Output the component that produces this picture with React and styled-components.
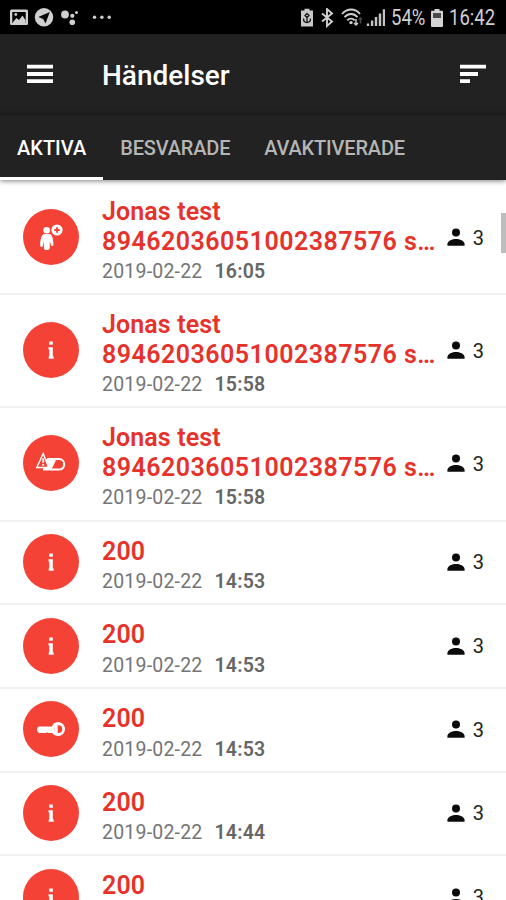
import React from "react";
import styled, { createGlobalStyle } from "styled-components";

const events = [
  { icon: "assist", name: "Jonas test", serial: "89462036051002387576 s…", time: "16:05" },
  { icon: "info", name: "Jonas test", serial: "89462036051002387576 s…", time: "15:58" },
  { icon: "battery", name: "Jonas test", serial: "89462036051002387576 s…", time: "15:58" },
  { icon: "info", name: "200", time: "14:53" },
  { icon: "info", name: "200", time: "14:53" },
  { icon: "key", name: "200", time: "14:53" },
  { icon: "info", name: "200", time: "14:44" },
  { icon: "info", name: "200" },
];

const tabs = ["AKTIVA", "BESVARADE", "AVAKTIVERADE"];

const EventIcon = ({ type }) => {
  if (type === "assist") {
    return (
      <svg width="56" height="56" viewBox="0 0 56 56" fill="#fff">
        <circle cx="23.700" cy="21.300" r="3.300" />
        <path d="M20.800 25h6.200c2.200 1.200 3.500 5.200 3.400 11.500l-2 .8-1.600-5v7.200l-1.500 1.600h-3.400l-1-1.600v-7l-1.400 5.500-2.300-.5c-.2-5.400.8-11.300 3.600-12.500z" />
        <circle cx="34" cy="21" r="5.600" />
        <path d="M33.100 18.300h1.800v1.800h1.800v1.800h-1.800v1.800h-1.800v-1.800h-1.800v-1.800h1.800z" fill="#f44336" />
      </svg>
    );
  }
  if (type === "battery") {
    return (
      <svg width="56" height="56" viewBox="0 0 56 56">
        <path
          d="M20 34.500h16c3.200 0 5.200-2.400 5.200-5.200s-2-5.300-5.200-5.300H24"
          fill="none"
          stroke="#fff"
          strokeWidth="2"
        />
        <path d="M23 24h10.500l-5 10.500H20z" fill="#fff" />
        <path d="M20.200 18.500 13.800 32.500h11.800z" fill="#f44336" stroke="#fff" strokeWidth="1.400" />
        <path d="M20.200 23.200v4.500M20.200 29v1.800" stroke="#fff" strokeWidth="1.800" />
      </svg>
    );
  }
  if (type === "key") {
    return (
      <svg width="56" height="56" viewBox="0 0 56 56" fill="#fff">
        <path
          fillRule="evenodd"
          d="M35 21a7 7 0 1 1-5.800 10.900h-3.700l-1.200-.7-1.300.7H15.900L14.100 30v-2.800l1.600-1.600h13.100A7 7 0 0 1 35 21zm.4 3.200a3.900 3.900 0 1 0 0 7.800 3.900 3.900 0 0 0 0-7.800z"
        />
        <path d="M31.500 24h3.200v8.200h-3.200z" />
      </svg>
    );
  }
  return (
    <svg width="56" height="56" viewBox="0 0 56 56" fill="#fff">
      <path d="M26.200 19.400h3.600v3.400h-3.600zM25.500 25.300h4.300v9.300h.9v2.200h-5v-2.200h.6v-7.100h-.8z" />
    </svg>
  );
};

const PersonIcon = () => (
  <svg width="18" height="19" viewBox="0 0 18 19" fill="#0b0b0b">
    <circle cx="9" cy="4.500" r="4" />
    <path d="M.4 17.800v-1.700C.4 12.700 5.500 10.900 9 10.900s8.600 1.800 8.600 5.200v1.700z" />
  </svg>
);

const NotificationIcons = () => (
  <svg width="104" height="20" viewBox="0 0 104 20" fill="#d0d0d0">
    <path
      fillRule="evenodd"
      d="M1.500 1.500h15q1.500 0 1.500 1.500v12.500q0 1.500-1.500 1.500h-15q-1.500 0-1.500-1.500V3q0-1.500 1.500-1.500zM2.300 4v11h13.400V4z"
    />
    <path d="m3 14 3.500-4 2.500 2 3.500-4.500 3.200 5V15H3z" />
    <circle cx="5.800" cy="6.500" r="1.400" />
    <circle cx="34" cy="9.200" r="9.200" />
    <path d="m28.300 9.100 11.500-5-4.300 11.500-2.300-4.700z" fill="#080808" />
    <circle cx="55" cy="6.500" r="3.900" />
    <circle cx="62.300" cy="7.800" r="2.100" />
    <circle cx="66.500" cy="4.500" r="1.500" />
    <circle cx="62.300" cy="14.200" r="2.800" />
    <circle cx="84.500" cy="9.300" r="1.700" />
    <circle cx="91.900" cy="9.300" r="1.700" />
    <circle cx="99.200" cy="9.300" r="1.700" />
  </svg>
);

const SignalIcons = () => (
  <svg width="84" height="20" viewBox="0 0 84 20" fill="none">
    <path d="M3.500 2.500V.8h5v1.700H12v16H0v-16z" fill="#c8c8c8" />
    <path
      d="m6 5.500 2 2-2 2-2-2zM6 10v5M2.500 10.500c0 3 1.500 4 3.500 4s3.500-1 3.500-4"
      stroke="#161616"
      strokeWidth="1.300"
    />
    <path d="m21 5.500 10 8-5 4.500V1l5 4.500-10 8" stroke="#d0d0d0" strokeWidth="1.900" />
    <path
      d="M41 6c5.200-6 13.200-6 18 0M43.500 9.200c4-4.200 9.300-4.200 13 0M46.300 12.300c2.200-2.300 5.300-2.300 7.400 0"
      stroke="#d0d0d0"
      strokeWidth="1.900"
    />
    <circle cx="50" cy="14.600" r="1.700" fill="#d0d0d0" />
    <path d="M55 11v6m-2-2 2 2 2-2" stroke="#c8c8c8" strokeWidth="1.500" />
    <path d="M59.500 15.500V10m-1.500 1.500 1.500-1.500 1.500 1.500" stroke="#4a4a4a" strokeWidth="1.400" />
    <path
      d="M67 15.500v2.500M71.100 12.500V18M75 9v9M79 5.500V18M83 1.200V18"
      stroke="#c4c4c4"
      strokeWidth="2.400"
    />
  </svg>
);

const BatteryIcon = () => (
  <svg width="12" height="18" viewBox="0 0 12 18">
    <path d="M3.500 1.700V0h5v1.700H11q1 0 1 1V17q0 1-1 1H1q-1 0-1-1V2.700q0-1 1-1z" fill="#d4d4d4" />
    <path d="M2 4h8v5H2z" fill="#4a4a4a" />
  </svg>
);

const App = () => {
  return (
    <>
      <GlobalStyle />
      <Screen>
        <StatusBar>
          <NotificationIcons />
          <StatusRight>
            <SignalIcons />
            <StatusText width={34}>54%</StatusText>
            <BatteryIcon />
            <StatusText width={46}>16:42</StatusText>
          </StatusRight>
        </StatusBar>
        <Toolbar>
          <svg width="26" height="20" viewBox="0 0 26 20" fill="#fff">
            <path d="M0 .8h26v3.800H0zM0 8.100h26v3.800H0zM0 15.300h26v3.800H0z" />
          </svg>
          <Title>Händelser</Title>
          <svg width="26" height="20" viewBox="0 0 26 20" fill="#fff">
            <path d="M0 .8h26v3.800H0zM0 8.100h18v3.800H0zM0 15.300h10v3.800H0z" />
          </svg>
        </Toolbar>
        <Tabs>
          {tabs.map((tab, i) => (
            <Tab key={tab} $active={i === 0}>
              {tab}
            </Tab>
          ))}
        </Tabs>
        <List>
          {events.map((event, i) => (
            <Row key={i} $tall={!!event.serial}>
              <Badge>
                <EventIcon type={event.icon} />
              </Badge>
              <Info>
                <Name>{event.name}</Name>
                {event.serial && <Name $serial>{event.serial}</Name>}
                <Stamp>
                  {event.time && (
                    <>
                      2019-02-22 <Time>{event.time}</Time>
                    </>
                  )}
                </Stamp>
              </Info>
              <Receivers>
                <PersonIcon />
                <Count>3</Count>
              </Receivers>
            </Row>
          ))}
          <ScrollThumb />
        </List>
      </Screen>
    </>
  );
};

const GlobalStyle = createGlobalStyle`
  * {
    box-sizing: border-box;
  }
  body {
    margin: 0;
    overflow: hidden;
    background: #fff;
    font-family: Roboto, "Liberation Sans", sans-serif;
  }
  svg {
    display: block;
    flex-shrink: 0;
  }
`;

const Screen = styled.div`
  width: 506px;
  height: 900px;
  display: flex;
  flex-direction: column;
  overflow: hidden;
`;

const StatusBar = styled.div`
  height: 34px;
  flex-shrink: 0;
  display: flex;
  justify-content: space-between;
  align-items: center;
  padding: 2px 11px 0 10px;
  background: #000;
`;

const StatusRight = styled.div`
  display: flex;
  align-items: center;
  gap: 6px;
`;

const StatusText = styled.span`
  width: ${(props) => props.width}px;
  color: #d0d0d0;
  font-size: 21.5px;
  line-height: 32px;
  white-space: nowrap;
  transform: scaleX(0.86);
  transform-origin: left center;
`;

const Toolbar = styled.div`
  height: 80px;
  flex-shrink: 0;
  display: flex;
  align-items: center;
  padding: 0 20px 0 27px;
  background: #222;
`;

const Title = styled.h1`
  flex: 1;
  margin: 2px 0 0 49px;
  color: #fff;
  font-size: 28px;
  font-weight: 500;
`;

const Tabs = styled.div`
  height: 66px;
  flex-shrink: 0;
  display: flex;
  position: relative;
  z-index: 1;
  background: #222;
  border-top: 1px solid #1a1a1a;
  box-shadow: 0 1px 5px rgba(0, 0, 0, 0.5);
`;

const Tab = styled.div`
  padding: 0 17px;
  line-height: 67px;
  font-size: 20px;
  font-weight: 500;
  letter-spacing: ${(props) => (props.$active ? 0 : -0.18)}px;
  color: ${(props) => (props.$active ? "#fff" : "#b5b5b5")};
  box-shadow: ${(props) => (props.$active ? "inset 0 -3px #fff" : "none")};
`;

const List = styled.div`
  position: relative;
  flex: 1;
  padding-top: 2px;
  overflow: hidden;
`;

const Row = styled.div`
  height: ${(props) => (props.$tall ? 113.2 : 83.7)}px;
  display: flex;
  align-items: center;
  padding: 0 22px 1px 23px;
  border-bottom: 2px solid #f1f1f1;
`;

const Badge = styled.div`
  width: 56px;
  height: 56px;
  flex-shrink: 0;
  border-radius: 50%;
  background: #f44336;
`;

const Info = styled.div`
  flex: 1;
  min-width: 0;
  margin: 9px 0 0 23px;
`;

const Name = styled.div`
  color: #e6322a;
  font-size: 25px;
  font-weight: 600;
  line-height: 29.5px;
  white-space: nowrap;
  letter-spacing: ${(props) => (props.$serial ? 0.48 : 0.1)}px;
`;

const Stamp = styled.div`
  height: 30px;
  color: #757575;
  font-size: 19.5px;
  line-height: 31px;
  letter-spacing: 0.2px;
`;

const Time = styled.span`
  margin-left: 7px;
  color: #666;
  font-weight: 600;
`;

const Receivers = styled.div`
  display: flex;
  align-items: center;
  gap: 8px;
  padding-top: 1px;
`;

const Count = styled.span`
  color: #222;
  font-size: 20px;
`;

const ScrollThumb = styled.div`
  position: absolute;
  top: 33px;
  right: 0;
  width: 5px;
  height: 40px;
  background: #bdbdbd;
`;

export default App;
